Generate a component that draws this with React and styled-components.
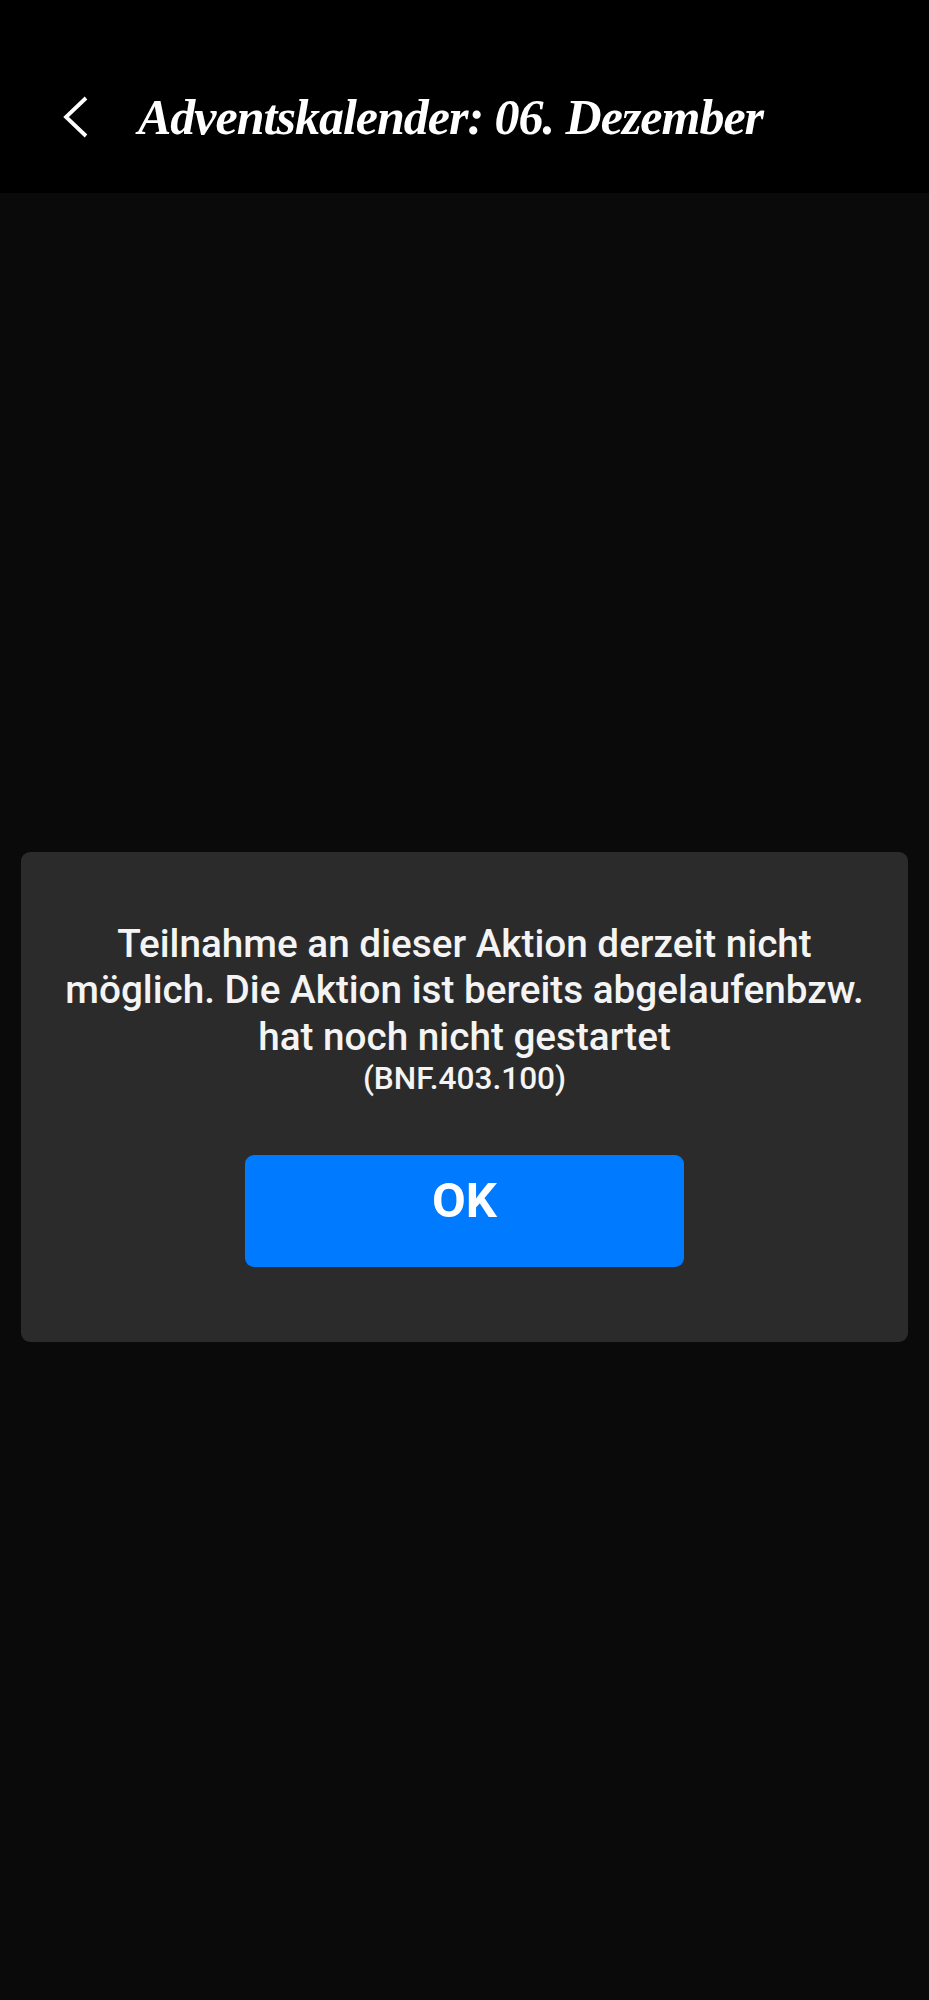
import React from "react";
import styled, { createGlobalStyle } from "styled-components";

const GlobalStyle = createGlobalStyle`
  html, body {
    margin: 0;
    padding: 0;
    background: #0a0a0a;
  }
  * {
    box-sizing: border-box;
  }
`;

const Page = styled.div`
  width: 929px;
  height: 2000px;
  display: flex;
  flex-direction: column;
  background: #0a0a0a;
  font-family: Roboto, "Liberation Sans", sans-serif;
  color: #f4f4f4;
`;

const Header = styled.header`
  height: 193px;
  flex-shrink: 0;
  display: flex;
  align-items: center;
  gap: 48px;
  padding: 41px 0 0 61px;
  background: #000;
`;

const BackButton = styled.button`
  width: 29px;
  height: 42px;
  padding: 0;
  display: flex;
  background: none;
  border: none;
  color: #fff;
  svg {
    width: 100%;
    height: 100%;
  }
`;

const Title = styled.h1`
  margin: 0;
  font-family: "Liberation Serif", serif;
  font-size: 50px;
  font-weight: 700;
  font-style: italic;
  letter-spacing: -1px;
  white-space: nowrap;
  color: #fff;
`;

const Main = styled.main`
  flex: 1;
  display: flex;
  align-items: center;
  padding: 0 21px;
`;

const Dialog = styled.section`
  width: 100%;
  height: 490px;
  display: flex;
  flex-direction: column;
  align-items: center;
  padding-top: 69px;
  background: #2b2b2b;
  border-radius: 9px;
  text-align: center;
`;

const Message = styled.p`
  margin: 0;
  font-size: 38.7px;
  font-weight: 500;
  line-height: 46.5px;
`;

const Code = styled.p`
  margin: 0 0 58px;
  font-size: 31.6px;
  font-weight: 500;
  line-height: 37px;
`;

const OkButton = styled.button`
  width: 439px;
  height: 112px;
  padding: 0 0 22px;
  background: #007aff;
  border: none;
  border-radius: 9px;
  color: #fff;
  font-family: inherit;
  font-size: 49px;
  font-weight: 700;
`;

export default function App() {
  return (
    <Page>
      <GlobalStyle />
      <Header>
        <BackButton aria-label="Zurück">
          <svg viewBox="0 0 29 42" fill="none" stroke="currentColor" strokeWidth="3.8">
            <path d="M25 2 L5 21 L25 40" />
          </svg>
        </BackButton>
        <Title>Adventskalender: 06. Dezember</Title>
      </Header>
      <Main>
        <Dialog>
          <Message>
            Teilnahme an dieser Aktion derzeit nicht
            <br />
            möglich. Die Aktion ist bereits abgelaufenbzw.
            <br />
            hat noch nicht gestartet
          </Message>
          <Code>(BNF.403.100)</Code>
          <OkButton>OK</OkButton>
        </Dialog>
      </Main>
    </Page>
  );
}
